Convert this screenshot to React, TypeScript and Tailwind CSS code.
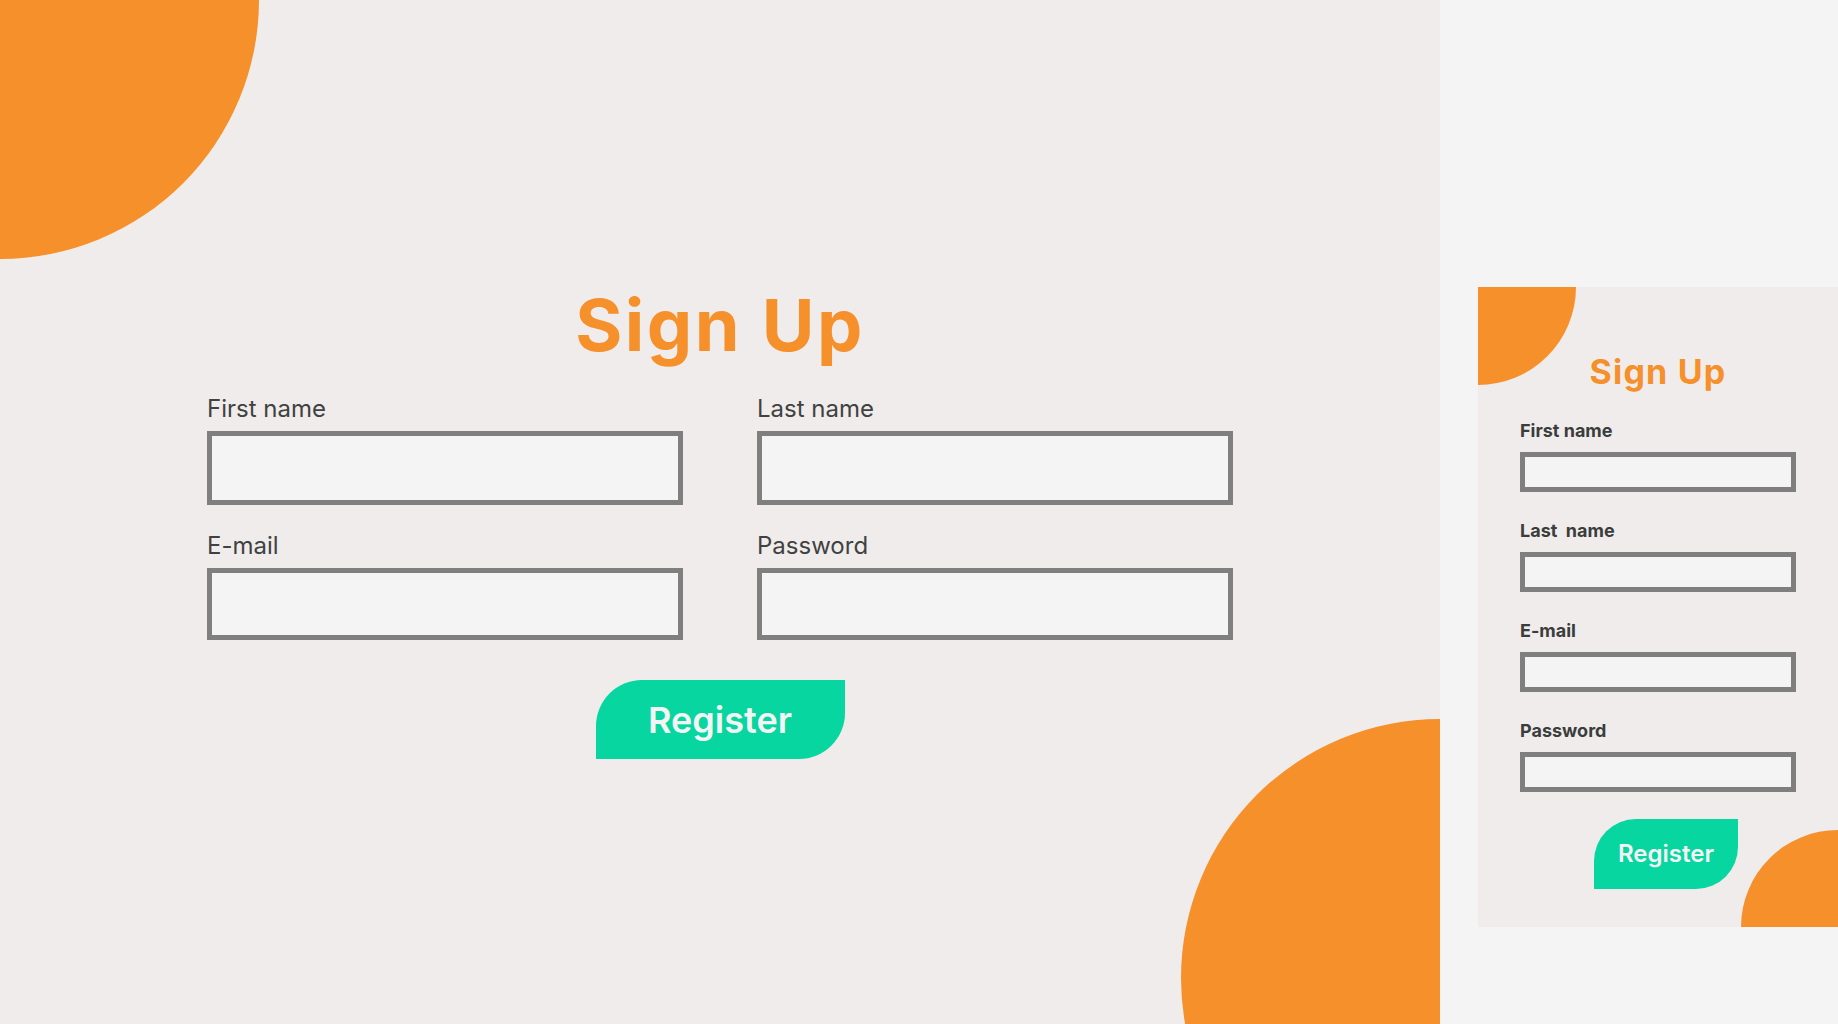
import React from 'react'

const fields = [
    { label: 'First name', type: 'text' },
    { label: 'Last name', type: 'text' },
    { label: 'E-mail', type: 'email' },
    { label: 'Password', type: 'password' },
]

const mobileFields = [
    { label: 'First name', type: 'text' },
    { label: 'Last\u00a0 name', type: 'text' },
    { label: 'E-mail', type: 'email' },
    { label: 'Password', type: 'password' },
]

const App = () => {
    return (
        <div className="flex w-[1838px] h-[1024px] bg-[#f4f4f4] overflow-hidden font-['Inter',sans-serif]">
            {/* Desktop */}
            <div className="relative w-[1440px] h-[1024px] shrink-0 bg-[#f0eceb] overflow-hidden">
                <div className="absolute -left-[259px] -top-[259px] w-[518px] h-[518px] rounded-full bg-[#f5902b]" />
                <div className="absolute left-[1181px] top-[719px] w-[518px] h-[518px] rounded-full bg-[#f5902b]" />

                <div className="relative flex flex-col items-center pt-[289px]">
                    <h1 className="text-[72px] leading-none font-bold tracking-[0.035em] text-[#f5902b]">Sign Up</h1>
                    <div className="grid grid-cols-2 gap-x-[74px] w-[1026px] mt-[36px]">
                        {fields.map((field, i) => (
                            <div key={field.label} className={i > 1 ? 'mt-[29px]' : ''}>
                                <label className="block text-[24px] leading-none text-[#3f4241]">{field.label}</label>
                                <input
                                    type={field.type}
                                    className={`block w-full mt-[10px] ${i > 1 ? 'h-[72px]' : 'h-[74px]'} border-[5px] border-[#7f7f7f] bg-[#f4f4f4] outline-none`}
                                />
                            </div>
                        ))}
                    </div>
                    <button className="mt-[40px] w-[249px] h-[79px] rounded-tl-[46px] rounded-br-[46px] bg-[#07d6a0] text-[36px] font-semibold text-[#f4f4f4]">
                        Register
                    </button>
                </div>
            </div>

            {/* Mobile */}
            <div className="pl-[38px] pt-[287px]">
                <div className="relative w-[360px] h-[640px] bg-[#f0eceb] overflow-hidden">
                    <div className="absolute -left-[98px] -top-[98px] w-[196px] h-[196px] rounded-full bg-[#f5902b]" />
                    <div className="absolute left-[263px] top-[543px] w-[194px] h-[194px] rounded-full bg-[#f5902b]" />

                    <div className="relative flex flex-col px-[42px] pt-[68px]">
                        <h2 className="text-center text-[34px] leading-none font-bold tracking-[0.035em] text-[#f5902b]">Sign Up</h2>
                        <div className="flex flex-col gap-[30px] mt-[33px]">
                            {mobileFields.map((field) => (
                                <div key={field.label}>
                                    <label className="block text-[18px] leading-none font-bold text-[#3a3d3c]">{field.label}</label>
                                    <input
                                        type={field.type}
                                        className="block w-full mt-[12px] h-[40px] border-[5px] border-[#7f7f7f] bg-[#f4f4f4] outline-none"
                                    />
                                </div>
                            ))}
                        </div>
                        <button className="mt-[27px] ml-[74px] w-[144px] h-[70px] rounded-tl-[42px] rounded-br-[42px] bg-[#07d6a0] text-[24px] font-semibold text-[#f4f4f4]">
                            Register
                        </button>
                    </div>
                </div>
            </div>
        </div>
    )
}

export default App
